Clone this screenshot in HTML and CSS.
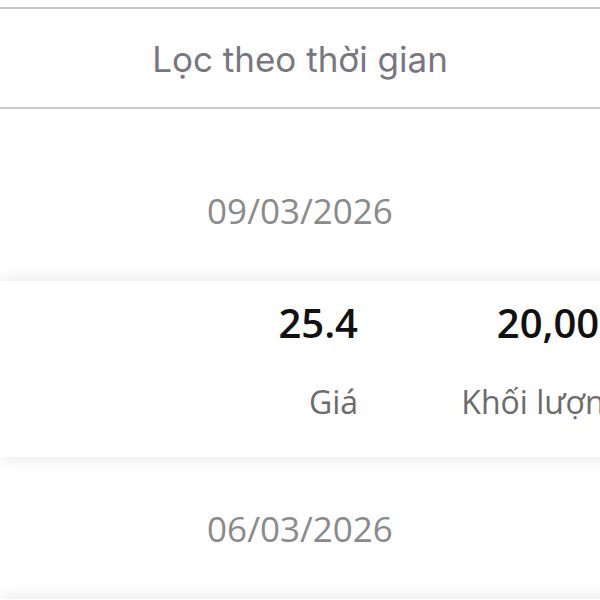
FILE: index.html
```html
<!DOCTYPE html>
<html lang="vi">
<head>
  <meta charset="UTF-8" />
  <meta name="viewport" content="width=device-width, initial-scale=1" />
  <title>Lịch sử giao dịch</title>
  <link rel="stylesheet" href="styles.css">
</head>
<body>
  <div class="screen">
    <!-- Filter bar -->
    <div class="filter-bar">
      <span class="filter-label">Lọc theo thời gian</span>
    </div>

    <!-- Trade history list -->
    <div class="history">
      <div class="date-row">09/03/2026</div>
      <div class="trade-card">
        <div class="trade-col spacer"></div>
        <div class="trade-col price">
          <div class="value">25.4</div>
          <div class="label">Giá</div>
        </div>
        <div class="trade-col volume">
          <div class="value">20,000</div>
          <div class="label">Khối lượng</div>
        </div>
      </div>

      <div class="date-row">06/03/2026</div>
      <div class="trade-card">
        <div class="trade-col spacer"></div>
        <div class="trade-col price">
          <div class="value">25.1</div>
          <div class="label">Giá</div>
        </div>
        <div class="trade-col volume">
          <div class="value">10,000</div>
          <div class="label">Khối lượng</div>
        </div>
      </div>
    </div>
  </div>
</body>
</html>
```

FILE: styles.css
```css
html, body {
  margin: 0;
  padding: 0;
  background: #fff;
  overflow: hidden;
}

.screen {
  width: 600px;
  height: 600px;
  overflow: hidden;
  padding-top: 7px;
  box-sizing: border-box;
}

.filter-bar {
  height: 98px;
  border-top: 2px solid #c9c7d4;
  border-bottom: 2px solid #c9c7d4;
  display: flex;
  align-items: center;
  justify-content: center;
}

.filter-label {
  font-family: Inter, 'Noto Sans', sans-serif;
  font-size: 35px;
  color: #78777f;
  padding-top: 1px;
}

.history {
  padding-top: 30px;
}

.date-row {
  height: 142px;
  display: flex;
  align-items: center;
  justify-content: center;
  font-family: 'Open Sans', 'Noto Sans', sans-serif;
  font-size: 35px;
  color: #8a8a8a;
}

.trade-card {
  width: 640px;
  height: 176px;
  padding-right: 18px;
  box-sizing: border-box;
  background: #fff;
  box-shadow: 0 0 18px rgba(0, 0, 0, 0.11);
  display: grid;
  grid-template-columns: 1fr 164px 264px;
  font-family: 'Open Sans', 'Noto Sans', sans-serif;
}

.trade-col {
  text-align: right;
  white-space: nowrap;
}

.trade-col .value {
  margin-top: 16px;
  font-size: 40px;
  font-weight: 600;
  color: #111;
  line-height: 52px;
}

.trade-col .label {
  margin-top: 33px;
  font-size: 32px;
  color: #6b6b6b;
  line-height: 40px;
}
```
